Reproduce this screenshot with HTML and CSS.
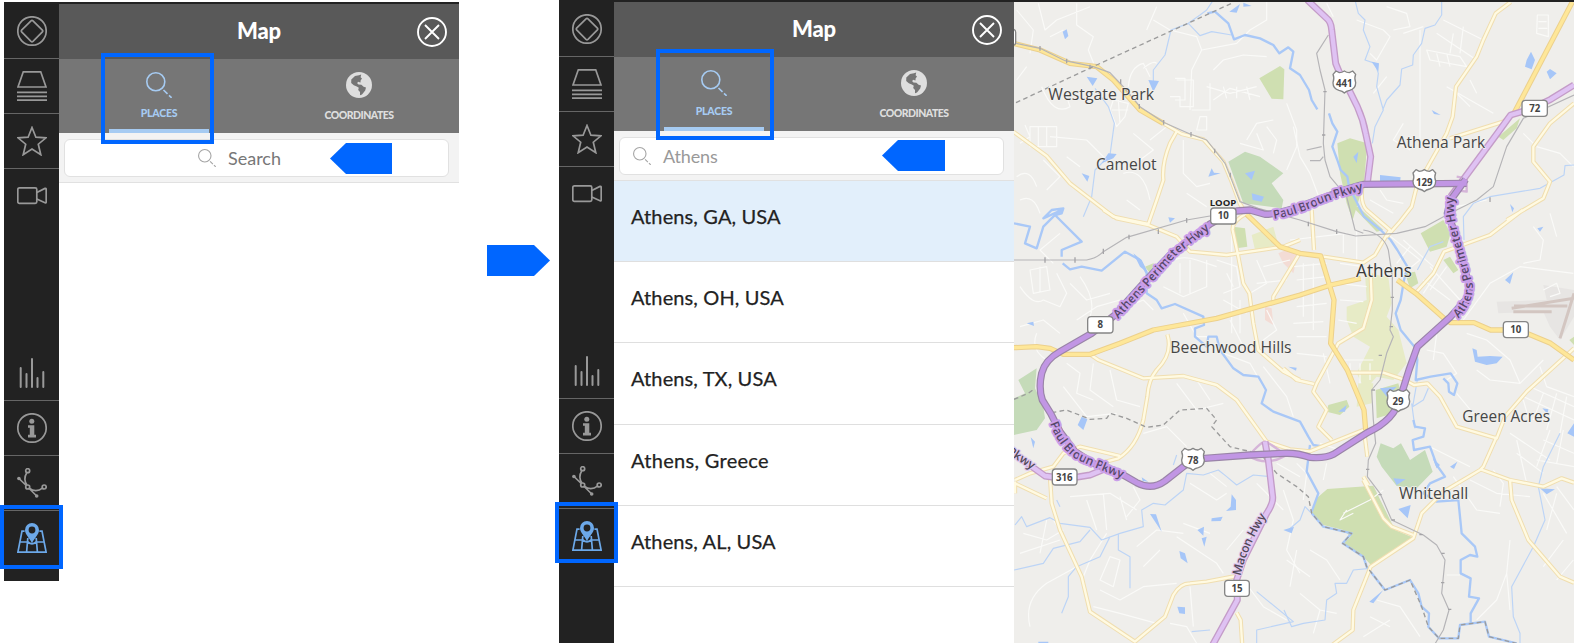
FILE: index.html
```html
<!DOCTYPE html>
<html lang="en">
<head>
<meta charset="utf-8">
<title>Map search</title>
<link rel="stylesheet" href="styles.css">
</head>
<body>
<svg class="sprite" aria-hidden="true">
  <symbol id="i-diamond" viewBox="0 0 30 30"><circle cx="15" cy="15" r="14.2"/><path d="M14 4.8Q15 3.9 16 4.8L25.4 14.2Q26.2 15 25.4 15.8L16 25.4Q15 26.2 14 25.4L4.6 15.8Q3.8 15 4.6 14.2Z"/></symbol>
  <symbol id="i-layers" viewBox="0 0 30 30"><path d="M6.3 .8H23.7L29 16H1Z"/><path d="M0 21.3H30M0 25.3H30M0 29.2H30"/></symbol>
  <symbol id="i-star" viewBox="0 0 30 30"><path d="M15 1.5L18.9 11.2L29 11.8L21.3 18.2L23.8 28.7L15 23.1L6.2 28.7L8.7 18.2L1 11.8L11.1 11.2Z"/></symbol>
  <symbol id="i-video" viewBox="0 0 30 30"><rect x=".8" y="6.8" width="19" height="15.6" rx="1.6"/><path d="M19.8 11.5L28 7.4Q29.2 7 29.2 8.4V20.8Q29.2 22.2 28 21.8L19.8 18"/></symbol>
  <symbol id="i-stats" viewBox="0 0 30 30"><path class="bars" d="M3.7 10V29M9.5 16V29M15 1V29M20.5 20V29M26.3 14V29"/></symbol>
  <symbol id="i-info" viewBox="0 0 30 30"><circle cx="15" cy="15" r="14.2"/><circle class="solid" cx="14.8" cy="8.2" r="2.5"/><path class="solid" d="M11 12.2H17.3V21.8H19V24.4H11V21.8H12.8V14.7H11Z"/></symbol>
  <symbol id="i-curve" viewBox="0 0 30 30"><circle cx="10.7" cy="2.7" r="2"/><circle cx="27.2" cy="19" r="2"/><circle cx="10.7" cy="19" r="2"/><circle class="solid" cx="1.9" cy="10.5" r="1.8"/><circle class="solid" cx="19.7" cy="28" r="1.8"/><path d="M2 10.5L9.2 17.5M12.2 20.5L19.7 28M9.8 4.7C7 9 7.4 14 10 17M12.7 20.4C16 23.4 21.5 23.4 25.4 20.2"/></symbol>
  <symbol id="i-map" viewBox="0 0 30 30"><path d="M7.6 8.2H5L.9 29.2H29.1L25 8.2H22.4M3 19H11M19 19H27M10.8 15L9.6 29M19.2 15L20.4 29M11 19Q15 22.5 19 19"/><path class="solid pin" fill-rule="evenodd" d="M15 0A7 7 0 0 1 22 7C22 11.5 17.5 15 15 20.2C12.5 15 8 11.5 8 7A7 7 0 0 1 15 0ZM15 3.6A3.4 3.4 0 1 0 15 10.4A3.4 3.4 0 1 0 15 3.6Z"/></symbol>
  <symbol id="i-glass" viewBox="0 0 26 26"><circle cx="9.8" cy="9.8" r="9"/><path d="M17.5 18L21.5 21.8M23 23.3L25.6 25.8"/></symbol>
  <symbol id="i-close" viewBox="0 0 30 30"><circle cx="15" cy="15" r="14"/><path d="M8 8L22 22M22 8L8 22"/></symbol>
  <symbol id="i-globe" viewBox="0 0 26 26"><circle class="land" cx="13" cy="13" r="13"/><path class="sea" d="M15.2 2.6L13 3.2L9 4L5.3 7.5L5.2 11L7.8 13.2L10.8 14.6L12.8 15.8L12.2 18L14 20L14 23.2L16 22.6L19.2 18.6L20 15.6L17.6 14.8L15.4 12.8L12.5 12.6L11.2 11.3L12 9.8L14.5 10.6L14.6 8.6L16 6.4L14.6 5.2Z"/></symbol>
</svg>

<main class="page">
  <section class="app app-left">
    <nav class="rail">
      <a class="tool"><svg><use href="#i-diamond"/></svg></a>
      <a class="tool"><svg><use href="#i-layers"/></svg></a>
      <a class="tool"><svg><use href="#i-star"/></svg></a>
      <a class="tool plain"><svg><use href="#i-video"/></svg></a>
      <a class="tool lower"><svg><use href="#i-stats"/></svg></a>
      <a class="tool"><svg><use href="#i-info"/></svg></a>
      <a class="tool"><svg><use href="#i-curve"/></svg></a>
      <a class="tool plain active"><svg><use href="#i-map"/></svg><span class="mark mark-tool"></span></a>
    </nav>
    <div class="panel">
      <header class="head"><h1>Map</h1><svg class="close"><use href="#i-close"/></svg></header>
      <div class="tabs">
        <div class="tab current"><svg><use href="#i-glass"/></svg><span class="tab-name places">PLACES</span><span class="mark mark-tab"></span></div>
        <div class="tab"><svg><use href="#i-globe"/></svg><span class="tab-name coords">COORDINATES</span></div>
      </div>
      <div class="search"><div class="field centered"><svg class="lens"><use href="#i-glass"/></svg><span class="hint">Search</span><i class="pointer"></i></div></div>
    </div>
  </section>

  <div class="between"><i class="pointer forward"></i></div>

  <section class="app app-right">
    <nav class="rail">
      <a class="tool"><svg><use href="#i-diamond"/></svg></a>
      <a class="tool"><svg><use href="#i-layers"/></svg></a>
      <a class="tool"><svg><use href="#i-star"/></svg></a>
      <a class="tool plain"><svg><use href="#i-video"/></svg></a>
      <a class="tool lower"><svg><use href="#i-stats"/></svg></a>
      <a class="tool"><svg><use href="#i-info"/></svg></a>
      <a class="tool"><svg><use href="#i-curve"/></svg></a>
      <a class="tool plain active"><svg><use href="#i-map"/></svg><span class="mark mark-tool"></span></a>
    </nav>
    <div class="panel">
      <header class="head"><h1>Map</h1><svg class="close"><use href="#i-close"/></svg></header>
      <div class="tabs">
        <div class="tab current"><svg><use href="#i-glass"/></svg><span class="tab-name places">PLACES</span><span class="mark mark-tab"></span></div>
        <div class="tab"><svg><use href="#i-globe"/></svg><span class="tab-name coords">COORDINATES</span></div>
      </div>
      <div class="search"><div class="field"><svg class="lens"><use href="#i-glass"/></svg><span class="hint typed">Athens</span><i class="pointer"></i></div></div>
      <ul class="results">
        <li class="chosen">Athens, GA, USA</li>
        <li>Athens, OH, USA</li>
        <li>Athens, TX, USA</li>
        <li class="greece">Athens, Greece</li>
        <li>Athens, AL, USA</li>
      </ul>
    </div>
    <svg class="map" viewBox="12 6 1680 1923" preserveAspectRatio="none">
      <defs>
        <g id="highways">
          <path d="M640 645L680 633L720 630L765 643C850 640 980 570 1062 553L1370 550"/>
          <path d="M1367 538L1322 600L1312 640L1332 690L1352 760L1367 820L1382 860Q1382 890 1362 905L1322 950L1222 1040L1197 1110L1172 1190Q1155 1260 1072 1298L972 1362Q945 1376 900 1372Q860 1358 822 1360L720 1365L585 1375Q550 1375 520 1400L465 1443Q425 1472 380 1448L340 1425L250 1390L195 1355L150 1295L122 1240L97 1200Q85 1165 95 1120Q105 1080 150 1055L245 1000L315 945L400 850L480 765L600 672L640 650"/>
        </g>
        <g id="routes">
          <path d="M892 0L950 55Q963 65 965 90L977 190Q985 215 1000 235L1042 320Q1060 360 1067 400L1082 470L1072 550"/>
          <path d="M1692 255L1622 298L1560 328L1502 345L1462 400L1322 590"/>
          <path d="M10 1360L105 1428Q170 1440 240 1425L300 1400"/>
          <path d="M765 1325L775 1380L788 1490Q790 1510 770 1540L740 1600L700 1680L680 1740L682 1800L605 1940"/>
        </g>
        <g id="arterials">
          <path d="M10 1043L80 1040L120 1045L160 1063L240 1063L330 1030L430 990L620 955L870 885L962 855L1052 835"/>
          <path d="M1162 840L1217 880L1302 955L1322 968H1392L1442 990H1482M1550 1000L1622 1030L1692 1080"/>
          <path d="M710 643L810 740L870 760L932 768L972 900L962 1030L1012 1110L1062 1230L1067 1290"/>
          <path d="M1687 6L1512 340"/>
          <path d="M10 130L90 150L180 190L260 200L310 240L390 330L460 370"/>
        </g>
        <g id="streets">
          <path d="M460 370L515 402L580 418L640 485L665 545L690 612L715 650"/>
          <path d="M10 395L110 468L180 550L310 650L415 672L440 600L460 540Q455 490 480 430L500 395"/>
          <path d="M280 630L320 655L415 675L500 710L540 755L650 765L820 740L870 720"/>
          <path d="M710 640Q665 665 668 690L685 770L700 850L718 880L730 970L745 1050L820 1115L870 1140"/>
          <path d="M870 758L790 890V905M472 1003Q490 1060 440 1110Q415 1140 412 1190L400 1260Q380 1340 325 1375L250 1395"/>
          <path d="M240 1063L265 1080L400 1135L520 1128L620 1155L680 1200L745 1290L770 1325L840 1348L900 1354L1060 1290"/>
          <path d="M1502 6L1457 40L1420 120L1400 170L1338 260L1328 350L1310 400L1220 560L1205 620L1170 665L1130 710"/>
          <path d="M1320 415L1480 365L1510 345M1692 310L1620 370L1570 440V485L1620 545L1600 595L1490 660M1538 630L1440 705L1302 755L1270 820L1220 875"/>
          <path d="M1057 560Q1050 610 1070 630L1140 690L1115 730L1095 765L1060 788L940 770M905 630L912 750"/>
          <path d="M1082 820L1085 900L1060 985L985 1030L920 1150L910 1175L950 1230L925 1280L965 1320M820 1105L860 1140L912 1152"/>
          <path d="M1010 1118H1120L1180 1138L1212 1155L1252 1150L1290 1190L1340 1280L1460 1315L1485 1250L1550 1175L1692 1045"/>
          <path d="M1062 1290L1072 1370M1460 1310L1420 1400L1410 1410L1300 1475L1235 1540L1210 1615L1082 1700L1030 1830L1028 1890L960 1940"/>
          <path d="M1412 1408L1500 1440L1600 1460L1655 1435L1692 1448M1500 1440L1505 1500L1555 1620L1650 1730L1692 1748"/>
          <path d="M1060 1440L1120 1555L1145 1580L1210 1605M1060 1430L1075 1455"/>
          <path d="M15 1440L60 1420L130 1400L160 1360L210 1340L330 1368M15 1450L110 1495M120 1430L125 1510L150 1590L215 1730L240 1835L375 1925L465 1850L490 1785Q510 1750 540 1750L590 1745L680 1728M680 1838L692 1860L697 1940"/>
          <path d="M15 1445V1480"/>
        </g>
      </defs>
      <rect class="ground" x="0" y="0" width="1700" height="1940"/>

      <g class="tint">
        <path class="campus" d="M1065 820L1135 830L1145 910L1130 950L1165 990L1190 1090L1150 1140L1100 1130L1065 1170L1040 1120L1080 1040L1030 1010L1010 960L1010 920L1070 900ZM725 705L790 680L805 735L735 750ZM1045 1150L1090 1150L1085 1210L1040 1220Z"/>
        <path class="park" d="M748 235L810 198L823 208L820 298L785 296ZM982 430L1020 415L1072 430L1062 550L1028 660L1010 610L990 520ZM1232 700L1300 660L1322 700L1310 740L1260 755ZM670 680L705 685L712 740L680 745ZM405 800L430 790L450 805L420 820ZM1300 780L1320 770L1345 810L1330 820ZM1185 820L1215 815L1225 850L1200 865ZM1097 1170L1165 1150L1180 1205L1150 1240L1100 1255ZM955 1215L1010 1200L1018 1220L990 1245L950 1235ZM1465 410L1530 355L1520 385L1480 420ZM1678 1020L1692 1010V1035ZM1028 620L1045 620L1120 690L1100 695Z"/>
        <path class="forest" d="M655 485L705 455L750 470L820 520L785 550L820 600L815 625L700 610ZM25 1140L80 1105L75 1165L100 1220L105 1255L80 1290L12 1305V1195L45 1180ZM1112 1330L1150 1345L1173 1330L1200 1380L1245 1350L1268 1415L1220 1465L1160 1458L1115 1400L1100 1370Z"/>
        <path class="park" d="M952 1467L1090 1457L1155 1590L1207 1612L1180 1635L1085 1697L1060 1670L998 1632L1022 1610L1000 1590L940 1575L905 1540L920 1495Z"/>
        <path class="pink" d="M805 760L840 745L865 760L850 820L820 790ZM765 920L785 925L790 975L765 960Z"/>
        <path class="airport" d="M1460 905L1610 900L1600 855L1692 870V950L1650 1020L1620 980L1600 935L1465 940Z"/>
      </g>

      <g class="minor">
        <path d="M85 10L105 90L140 60L240 20M200 10V75L250 110L235 150L255 200M20 30L70 90L60 160M120 110L160 90M50 200L20 240M95 260Q130 350 180 320L170 290M45 375L60 410L30 430M60 380H140V440H60ZM85 380V440M110 380V440M120 410L230 420L290 480M20 530Q60 500 80 560M30 600Q70 580 90 640M100 480L150 530L110 570M170 470L210 500M310 300L355 310L345 350L320 380L300 330ZM325 300L330 370M305 330H355M355 260Q360 200 400 190L420 230M400 205Q430 180 440 190M430 60L480 90L560 110L575 150L545 210L540 330M410 90L440 20M575 150L680 130L720 90L770 60V0M610 210L640 180L700 165L770 170M590 260L660 280L740 260M610 300L660 265L750 290M640 260L650 295M680 260V295M710 260L720 300M500 240H550V320H510V290H480M545 330H600V250M570 350H590V390H560ZM370 400L430 450L390 480M420 420L470 380M520 420V520L560 560L600 550M710 420L740 370L790 360M690 430L760 450L740 400M830 310L860 390V440L830 510M770 380L800 420L790 460M530 580L590 620M340 520Q400 500 420 600M350 600L390 630"/>
        <path d="M1130 20L1190 40L1200 80L1150 90M1180 100L1240 80M1040 60L1120 90L1140 110L1100 180L1080 160M1280 100L1340 140L1400 180M1300 60L1420 120M1330 100L1320 160M1360 80L1350 160M1250 150L1350 170L1370 200L1260 180ZM1280 160L1290 200M1310 160L1320 200M1230 90V440M1130 230L1090 280M1310 260L1450 340M1380 240L1400 280M1330 270L1380 320M1582 45H1615V110L1580 100ZM1585 65H1610M1585 85H1612M1180 370L1150 420L1200 450M950 10L970 50M850 380L870 470L900 520L930 600M1540 400L1570 430M1580 440L1650 460L1690 500M1110 570L1130 600L1180 610M1080 600L1150 640M1340 620L1430 600"/>
        <path d="M60 810L110 800L120 870L70 880ZM90 800V875M30 860Q70 920 100 900L150 920L170 880L140 820M150 700L90 750L130 790M180 850L230 900L300 880M200 960L260 920L330 900M210 830Q260 900 240 950M350 920L400 900L430 930M30 980L100 960L150 1000M80 1000Q60 1050 110 1080M170 1090L210 1120L200 1180L250 1200M250 1090L240 1170L310 1220M300 1110L320 1200L390 1220M160 1160L230 1250L320 1240M470 800Q500 760 560 780L620 800M460 860L520 890L590 860V780M510 790V880M540 780V880M620 780L680 800L690 860L640 880M650 820L670 860M640 900L710 940M740 780L770 850L720 880M760 800L840 780M740 850L830 840M770 930L800 990L760 1020M520 940L560 1010L620 1010M500 1150L560 1230L640 1210M560 1140L600 1200M640 1060L720 1090L760 1160M760 1100L830 1190L850 1250M660 960L700 1040"/>
        <path d="M840 720L1010 700M850 800L950 790M860 840L950 830M990 790L1060 800M985 850L1070 860M990 900L1060 905M985 960L1040 970M860 920L950 910M850 970L940 965M860 1010L950 1010M1000 700V760M1040 690V780M880 790V950M910 790V990M940 1060L960 1150M860 1060L950 1070M990 1080H1090M1020 1090V1150M1050 1090V1150M1080 1090V1140M1130 700L1230 780L1180 820M1180 720L1270 800M1240 840L1320 900M1260 800L1350 900M1280 820L1240 880M1310 800L1260 870M1200 740L1160 790M1570 680L1600 720L1590 780L1540 790M1620 640L1640 710M1360 960L1440 850L1530 800L1690 820M1370 1000L1430 1020L1500 1080L1530 1150M1250 1050L1300 1060L1340 1120L1310 1140M1280 1000L1270 1080M1400 1110L1440 1140L1530 1150L1600 1080M1590 1100L1610 1160L1692 1190M1560 1160L1692 1220M1540 1190L1692 1260M1600 1180L1570 1260M1640 1180L1610 1290M1670 1190L1650 1300M1540 1200L1560 1270M1340 1180L1390 1240"/>
        <path d="M180 1490L300 1480L380 1530M230 1500L260 1590M280 1480L290 1590M330 1490L350 1560M370 1460L390 1500L350 1550M40 1600L110 1620L160 1590M30 1660L150 1620M110 1560L90 1660M130 1560L180 1640M290 1600L240 1680L220 1730M300 1670L330 1680L310 1760L270 1740ZM60 1880Q40 1800 110 1750L200 1700M270 1770L330 1800L400 1760L500 1750M250 1820L330 1840L440 1870M380 1640L440 1590L520 1600M400 1700L450 1650M500 1610Q560 1650 620 1690L640 1720M520 1570L600 1600M540 1450L620 1500L650 1480M600 1420L650 1460M650 1650L700 1590M540 1760L550 1880M480 1870L530 1880L560 1930M700 1740L760 1820L830 1860M820 1470L850 1560L830 1650L870 1720M740 1450L820 1530M800 1390L870 1430M400 1300L470 1280L530 1340"/>
        <path d="M860 1390L890 1420L880 1500M930 1330L990 1350M950 1390L940 1440M1260 1340L1380 1400M1330 1430L1400 1530L1470 1540M1380 1440L1460 1480L1560 1490M1450 1410L1480 1450L1470 1520M1520 1360L1600 1420M1500 1300L1620 1380M1580 1380L1692 1400M1600 1320L1692 1360M1620 1290L1580 1400M1660 1290L1640 1390M1520 1320L1550 1450M1640 1460L1692 1530M1600 1480L1670 1600M1640 1480L1610 1590M1660 1620L1600 1700M1690 1680L1640 1740M1310 1725H1350M1500 1620L1490 1720L1460 1800L1400 1860M1490 1720L1500 1830M1030 1540L990 1560L1010 1530M1000 1540L1080 1500L1120 1470M860 1650L840 1760M870 1780L930 1830L910 1900M930 1830L980 1840M1100 1800L1170 1820L1230 1910M1080 1850L1140 1880M1060 1910L1140 1860M900 1650L950 1680L990 1740M830 1680L900 1730"/>
        <path d="M495 235H525V300H495M665 700V1000M690 900V1000M1600 870L1640 850L1650 880L1620 890"/>
      </g>
      <path class="runway" d="M1505 925L1692 895M1512 918H1672M1510 935H1625M1692 880L1650 1015"/>

      <g class="creek">
        <path d="M610 0L590 30L570 45L535 70L483 90L465 165L430 210V245M535 70L570 107L605 95L665 105M255 265L295 320L313 370L300 465L255 510L245 590L220 650"/>
        <path d="M1035 0L1045 40L1065 60L1060 90L1080 140L1065 180L1095 190L1105 220L1100 260L1120 330L1095 380L1087 430M1295 0V45L1275 75L1245 85L1235 130L1210 165L1208 195L1175 207L1170 255L1130 300L1118 330M1300 725L1260 740L1222 810M1692 495L1665 497L1662 525L1590 565L1440 590L1390 610L1360 650L1362 720"/>
        <path d="M15 1575L35 1550L50 1580L120 1553L150 1570L240 1582L275 1620L330 1600L400 1580L395 1530L430 1510L465 1515L520 1470L530 1420L580 1425L625 1410L650 1430L680 1455L730 1425L780 1430M325 1600V1650L360 1670V1765M300 1610L270 1670L200 1700L175 1730V1790L155 1840M12 1710L100 1690L130 1645L210 1625L240 1590M150 1520L140 1500M500 1365L490 1395M740 1775L850 1865L740 1890V1930M545 1895L600 1890M1650 1300L1600 1400L1585 1460L1605 1560L1570 1640L1505 1760L1510 1850L1530 1900V1940"/>
        <path d="M1080 1705L1030 1710L1010 1750L975 1750L980 1780L950 1800L945 1860L880 1870L845 1880L822 1830M905 1540L885 1520L870 1560L835 1590M1222 1140L1208 1220L1240 1200L1255 1165M1205 1210L1215 1285"/>
      </g>
      <g class="river">
        <path d="M592 40L615 35L655 70L672 118L705 105L750 115L790 135L808 160L835 142L850 155L840 205L870 225L897 270L905 300L922 328M957 340L967 370L982 395L967 440L982 480L992 510L1012 530L1017 560L1037 600L1062 650L1112 690L1142 720L1162 750L1192 800L1182 840L1172 900L1157 940L1172 990L1217 1045L1222 1080L1217 1140L1262 1130L1322 1120L1342 1150L1332 1185L1317 1175L1315 1150L1300 1135"/>
        <path d="M12 670L60 680L45 730L80 745L100 680L130 650L155 630L100 655L125 630L160 625L155 640L135 645L215 725L155 750V770M158 790L180 808L215 800L275 812L345 755L390 780L410 820V880L440 900L455 925L495 912L580 950L582 975L555 985V1010L590 1040L595 1010L620 1010L630 1050L670 1105L700 1125L745 1130L768 1170L755 1210L790 1235L870 1265L895 1310L910 1335L940 1340M900 1335L890 1415L925 1480L905 1535"/>
        <path d="M1210 1260L1215 1280L1245 1285L1240 1310L1208 1320L1212 1350L1260 1340L1280 1395L1305 1430L1260 1450L1240 1480L1280 1505L1345 1500L1355 1600L1395 1640L1402 1670L1380 1665L1352 1680V1720L1382 1735L1377 1790L1407 1795L1382 1840V1870M905 1540L940 1580L1025 1600L998 1630L1060 1670L1070 1700L1125 1770L1200 1740L1225 1780L1235 1820L1257 1840L1255 1880L1287 1915H1345L1350 1875L1425 1865L1437 1910L1520 1930"/>
      </g>
      <g class="pond">
        <path d="M658 35L690 12L680 38ZM700 8L725 18L700 20ZM158 95L170 88L175 108L165 118ZM230 230L262 235L248 258ZM415 240L447 243L430 275ZM295 460L320 462L310 475L275 490ZM215 520L238 528L232 545ZM605 505L612 518L632 520L595 530ZM725 580L762 590L755 605L728 600ZM705 520L735 512L725 540ZM475 652L495 655L480 668ZM370 760L395 780L415 820L390 800ZM50 970L70 965L72 978ZM215 1250L232 1258L220 1290L203 1275ZM835 1100L860 1103L858 1112Z"/>
        <path d="M1085 185L1107 190L1105 215ZM1550 180L1563 155L1575 180L1565 208L1545 200ZM1610 215L1620 207L1640 220L1620 238ZM1265 330L1292 345L1272 342ZM1110 525L1172 532L1170 545L1110 543ZM1030 470L1045 455L1040 490ZM1500 612L1512 625L1507 637ZM1582 685L1600 680L1590 695ZM1485 840L1510 817L1500 852ZM1387 1045L1400 1050L1403 1070L1440 1068L1478 1070L1460 1090L1430 1095L1395 1085ZM1110 1165L1160 1160L1130 1190ZM985 1235L1010 1215L1005 1235ZM1597 1225L1615 1228L1613 1242Z"/>
        <path d="M62 1312L75 1325L70 1345ZM420 1542L438 1543L455 1595ZM665 1483L678 1500V1530L648 1533L662 1520ZM605 1555L638 1550L632 1563L604 1564ZM562 1590L582 1580L580 1607ZM575 1615L590 1610L583 1640ZM508 1653L525 1660L533 1690L512 1675ZM502 1820L525 1822V1842L508 1840ZM820 1590L852 1580L845 1600ZM85 1925H115V1940H85ZM395 1432L415 1445L398 1443ZM1150 1435L1187 1438L1160 1455ZM1165 1527L1202 1515L1193 1555ZM1078 1805L1120 1770L1090 1810ZM1320 1400L1342 1385L1332 1407ZM1590 1465L1635 1468L1610 1483ZM1268 1375L1290 1395L1280 1405ZM1672 1300L1692 1270V1310Z"/>
      </g>

      <use href="#streets" class="street-edge"/><use href="#streets" class="street"/>
      <use href="#arterials" class="arterial-edge"/><use href="#arterials" class="arterial"/>
      <path class="rail-line" d="M12 780H230Q260 775 280 755L350 712L530 660L600 648M18 130L90 145L165 182L250 200L300 218L340 260L390 320L460 367L540 402L590 420L645 490L665 540L690 605L745 625L870 660L980 695L1037 708L1160 700L1245 680L1310 645L1400 600L1450 560L1490 440L1540 355L1692 285M955 105L920 160L930 210L945 270L940 430L945 480L960 530L1010 590L1035 690L1060 700M890 450L935 440M900 482H930L940 470M1060 690Q1120 700 1135 750L1147 830V930L1140 990L1150 1010L1130 1060L1110 1140L1085 1170L1090 1260L1097 1330L1075 1380L1072 1430L1110 1480L1145 1560L1240 1605L1280 1635L1305 1680L1295 1780L1317 1830L1300 1890L1270 1940"/>
      <path class="ticks" d="M90 138V152M170 176V190M240 194V208M332 238V252M388 312V326M461 360V374M543 396V410M614 446V460M661 518V532M940 275H950M936 405H946M1440 592V606M105 772V788M195 772V788M280 746V762M357 704V718M445 688V702M530 654V668M895 665V679M980 688V702M1142 892H1152M1139 980H1149M1106 1066H1116M1085 1170H1095M1068 1408H1078M1105 1484H1115M1145 1560H1155M1228 1604H1238M1294 1660H1304M1293 1748H1303M1314 1828H1324"/>

      <path class="border" d="M18 308L260 195L665 10"/>
      <path class="border" d="M12 1198L55 1180L75 1165M125 1238L170 1230L240 1258L290 1255L300 1240L350 1255L410 1282L460 1275L510 1230L590 1225L620 1260L605 1280L660 1340L700 1350L750 1360L800 1420L860 1460L895 1490L905 1540L940 1580L1025 1600L998 1630L1060 1670L1070 1700L1125 1770L1200 1740L1235 1820L1255 1880L1287 1915H1345L1350 1875L1425 1865L1437 1910L1520 1930"/>
      <path class="junction" d="M715 1368Q760 1320 765 1325Q800 1340 825 1368Q770 1400 715 1368ZM1340 530L1370 535V575L1330 570"/>
      <use href="#routes" class="route-edge"/><use href="#routes" class="route"/>
      <use href="#highways" class="highway-edge"/><use href="#highways" class="highway"/>

      <path id="t1" class="guide" d="M325 957L420 855L500 765L610 680"/>
      <path id="t2" class="guide" d="M792 657Q860 645 930 612Q1000 585 1075 567"/>
      <path id="t3" class="guide" d="M1345 955Q1394 905 1388 850L1362 760L1342 690L1332 640L1332 580"/>
      <path id="t4" class="guide" d="M120 1270Q145 1340 195 1375Q255 1405 345 1438"/>
      <path id="t5" class="guide" d="M-10 1360L75 1415"/>
      <path id="t6" class="guide" d="M692 1728Q710 1640 772 1545"/>
      <g class="road-name">
        <text textLength="386"><textPath href="#t1">Athens Perimeter Hwy</textPath></text>
        <text textLength="282"><textPath href="#t2">Paul Broun Pkwy</textPath></text>
        <text textLength="384"><textPath href="#t3">Athens Perimeter Hwy</textPath></text>
        <text textLength="285"><textPath href="#t4">Paul Broun Pkwy</textPath></text>
        <text class="on-light" textLength="90"><textPath href="#t5">Pkwy</textPath></text>
        <text class="on-light" textLength="196"><textPath href="#t6">Macon Hwy</textPath></text>
      </g>

      <g class="shield">
        <rect x="-29" y="88" width="46" height="48" rx="9"/><rect x="602" y="624" width="76" height="48" rx="10"/><rect x="1536" y="301" width="76" height="48" rx="10"/><rect x="233" y="950" width="76" height="49" rx="10"/><rect x="1480" y="965" width="75" height="48" rx="10"/><rect x="127" y="1407" width="74" height="48" rx="10"/><rect x="644" y="1741" width="74" height="48" rx="10"/>
        <path id="us" d="M-25 -33L-15 -28Q-7 -28 0 -33Q7 -28 15 -28L25 -33L34 -23Q29 -12 34 2Q34 20 16 25Q5 27 0 33Q-5 27 -16 25Q-34 20 -34 2Q-29 -12 -34 -23Z" transform="translate(1003 246)"/>
        <use href="#us" x="240" y="296"/><use href="#us" x="162" y="956"/><use href="#us" x="-454" y="1132"/>
      </g>
      <g class="shield-number">
        <text x="640" y="658">10</text><text x="1574" y="336">72</text><text x="271" y="984">8</text><text x="1517" y="1000">10</text><text x="163" y="1442">316</text><text x="681" y="1775">15</text>
        <text x="1003" y="261">441</text><text x="1243" y="557">129</text><text x="1164" y="1215">29</text><text x="549" y="1393">78</text>
      </g>
      <g class="place">
        <text x="115" y="300" textLength="317" lengthAdjust="spacingAndGlyphs">Westgate Park</text>
        <text x="258" y="510" textLength="182" lengthAdjust="spacingAndGlyphs">Camelot</text>
        <text x="1160" y="443" textLength="266" lengthAdjust="spacingAndGlyphs">Athena Park</text>
        <text class="city" x="1038" y="832" textLength="168" lengthAdjust="spacingAndGlyphs">Athens</text>
        <text x="481" y="1058" textLength="364" lengthAdjust="spacingAndGlyphs">Beechwood Hills</text>
        <text x="1357" y="1267" textLength="263" lengthAdjust="spacingAndGlyphs">Green Acres</text>
        <text x="1167" y="1498" textLength="208" lengthAdjust="spacingAndGlyphs">Whitehall</text>
        <text class="loop" x="599" y="617" textLength="80" lengthAdjust="spacingAndGlyphs">LOOP</text>
      </g>
    </svg>
  </section>
</main>
</body>
</html>
```
FILE: styles.css
```css
* { box-sizing: border-box; }
body { margin: 0; background: #fff; font-family: Lato, "Open Sans", sans-serif; }
.sprite { position: absolute; width: 0; height: 0; }
.page { display: flex; align-items: flex-start; width: 1574px; height: 643px; overflow: hidden; }
.app { display: flex; border-top: 2px solid #222; }
.app-left { margin: 2px 0 0 4px; height: 579px; }
.app-right { width: 1015px; height: 643px; }
.between { width: 100px; height: 643px; padding: 245px 0 0 28px; }

.rail { width: 55px; height: 100%; display: flex; flex-direction: column; background: #222; }
.app-left .rail { padding-bottom: 15px; }
.app-right .rail { padding-bottom: 79px; }
.tool { position: relative; height: 55px; flex: none; padding: 12px 12px 0 13px; border-bottom: 1px solid #666; }
.tool.plain { border-bottom-color: transparent; }
.tool.lower { margin-top: auto; }
.tool svg { display: block; width: 30px; height: 30px; fill: none; stroke: #999; stroke-width: 1.7; color: #999; }
.solid { fill: currentColor; stroke: none; }
.bars { stroke-width: 2; stroke-linecap: round; }
.tool.active svg { stroke: #6ca8e8; color: #6ca8e8; }

.panel { width: 400px; flex: none; background: #fff; }
.head { position: relative; height: 55px; background: #595959; }
.head h1 { margin: 0; font-size: 22px; line-height: 53px; font-weight: 900; text-align: center; color: #fff; letter-spacing: -.1px; }
.close { position: absolute; left: 358px; top: 13px; width: 30px; height: 30px; fill: none; stroke: #fff; stroke-width: 1.9; }
.tabs { display: grid; grid-template-columns: 1fr 1fr; height: 74px; background: #767676; }
.tab { position: relative; display: flex; flex-direction: column; align-items: center; padding-top: 13px; color: #dedede; }
.tab svg { width: 26px; height: 26px; flex: none; }
.tab.current { color: #a6cbf2; }
.tab.current svg { fill: none; stroke: #a6cbf2; stroke-width: 1.6; }
.tab.current::after { content: ""; position: absolute; left: 50px; bottom: 0; width: 100px; height: 4px; background: #a6cbf2; }
.land { fill: #dedede; }
.sea { fill: #757575; }
.tab-name { font-size: 10.5px; line-height: 12px; font-weight: 900; margin-top: 11px; letter-spacing: -.5px; }
.places { margin-top: 9px; letter-spacing: -.25px; }
.search { height: 50px; padding: 6px 10px 5px 5px; background: #f3f3f3; border-bottom: 1px solid #e1e1e1; }
.field { position: relative; height: 38px; width: 385px; display: flex; align-items: center; gap: 12px; padding-left: 13px; background: #fff; border: 1px solid #e1e1e1; border-radius: 6px; }
.field.centered { padding-left: 133px; }
.lens { width: 18px; height: 18px; fill: none; stroke: #a5a5a5; stroke-width: 1.6; overflow: visible; }
.hint { font-size: 18px; line-height: 36px; color: #777; }
.typed { color: #999; letter-spacing: -.15px; }
.pointer { display: block; width: 62px; height: 31px; background: #06f; clip-path: polygon(0 50%, 16px 0, 100% 0, 100% 100%, 16px 100%); }
.field .pointer { position: absolute; left: 265px; top: 3px; }
.app-right .field .pointer { left: 262px; top: 2px; width: 63px; }
.pointer.forward { width: 63px; clip-path: polygon(0 0, 47px 0, 100% 50%, 47px 100%, 0 100%); }
.results { margin: 0; padding: 0; list-style: none; }
.results li { height: 81.2px; padding-left: 17px; line-height: 71px; font-size: 20px; letter-spacing: .12px; color: #222; border-bottom: 1px solid #dfdfdf; -webkit-text-stroke: .25px #222; }
.results .greece { letter-spacing: .3px; }
.results .chosen { background: #e2effb; }

.mark { position: absolute; z-index: 2; border: 4px solid #06f; }
.mark-tab { left: 42px; top: -6px; width: 113px; height: 91px; }
.app-right .mark-tab { top: -8px; width: 118px; }
.mark-tool { left: -4px; top: -6px; width: 63px; height: 64px; }
.app-right .mark-tool { top: -7px; height: 61px; }

.map { display: block; width: 560px; height: 641px; flex: none; fill: none; stroke-linejoin: round; font-family: "Open Sans", "Noto Sans", sans-serif; }
.ground { fill: #efeeeb; }
.campus { fill: #e7ebc6; }
.park { fill: #cfdfb1; }
.forest { fill: #c5dbb9; }
.pink { fill: #f3dcd5; }
.airport { fill: #e7e5e3; }
.runway { stroke: #d3c6c1; stroke-width: 9; }
.minor { stroke: #fafaf8; stroke-width: 3.5; }
.creek { stroke: #bcd4f6; stroke-width: 3.5; }
.river { stroke: #a9c8f7; stroke-width: 7; }
.pond { fill: #a6c6f8; }
.rail-line { stroke: #b5b4b7; stroke-width: 3.5; }
.ticks { stroke: #a5a4a7; stroke-width: 4; }
.street-edge { stroke: #f0deb0; stroke-width: 13; }
.street { stroke: #fffae2; stroke-width: 7; }
.arterial-edge { stroke: #ecd08c; stroke-width: 16; }
.arterial { stroke: #fee799; stroke-width: 10; }
.border { stroke: #9b9b9b; stroke-width: 4; stroke-dasharray: 14 10; }
.junction { stroke: #d5b5d8; stroke-width: 7; }
.highway-edge { stroke: #9a84a8; stroke-width: 22; }
.highway { stroke: #c196e4; stroke-width: 15; }
.route-edge { stroke: #c49cc8; stroke-width: 21; }
.route { stroke: #dfc2f3; stroke-width: 13; }
.guide { stroke: none; }
.road-name text { font-size: 36px; font-weight: 600; fill: #564869; stroke: #ca9fea; stroke-width: 12; paint-order: stroke; }
.road-name .on-light { fill: #514858; stroke: #e0c8ef; stroke-width: 7; }
.shield { fill: #fff; stroke: #858585; stroke-width: 4; }
.shield-number text { font-size: 29px; font-weight: 700; fill: #444; text-anchor: middle; }
.place text { font-size: 50px; fill: #464646; stroke: #f4f3f0; stroke-width: 4; paint-order: stroke; font-weight: 500; }
.place .city { font-size: 54px; fill: #3a3a3a; }
.place .loop { font-size: 26px; font-weight: 700; fill: #222; }
```
